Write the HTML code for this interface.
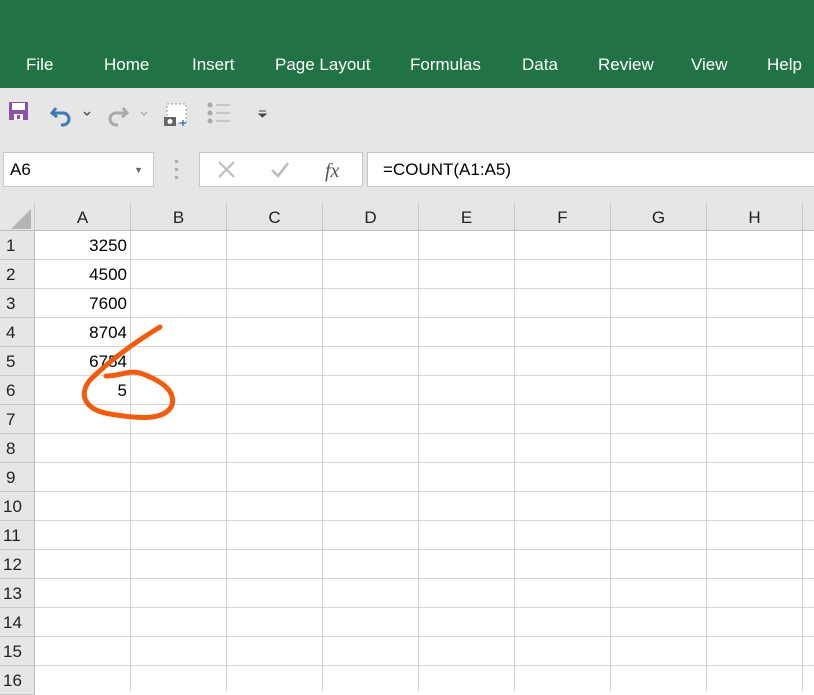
<!DOCTYPE html>
<html><head><style>
body{margin:0;width:814px;height:691px;overflow:hidden;background:#fff;font-family:"Liberation Sans",sans-serif;position:relative}
.abs{position:absolute}
#rib{left:0;top:0;width:814px;height:88px;background:#217346}
.tab{position:absolute;top:55px;color:#fff;font-size:17px}
#tb{left:0;top:88px;width:814px;height:115px;background:#e6e6e6}
.box{position:absolute;background:#fff;border:1px solid #c6c6c6;box-sizing:border-box}
.ch{position:absolute;top:203px;height:28px;background:#e6e6e6;border-right:1px solid #c8c8c8;box-sizing:border-box;text-align:center;font-size:17px;line-height:30px;color:#222}
.rh{position:absolute;left:0;width:35px;height:29px;background:#e6e6e6;border-bottom:1px solid #c8c8c8;border-right:1px solid #bdbdbd;box-sizing:border-box;font-size:17px;line-height:29px;padding-left:6px;color:#222}
.vl{position:absolute;top:231px;width:1px;height:460px;background:#d4d4d4}
.hl{position:absolute;left:35px;width:779px;height:1px;background:#d4d4d4}
.num{position:absolute;width:92px;left:35px;text-align:right;font-size:17px;color:#000;line-height:29px}
</style></head><body>
<div id="rib" class="abs"></div>
<div class="tab" style="left:26px">File</div>
<div class="tab" style="left:104px">Home</div>
<div class="tab" style="left:192px">Insert</div>
<div class="tab" style="left:275px">Page Layout</div>
<div class="tab" style="left:410px">Formulas</div>
<div class="tab" style="left:522px">Data</div>
<div class="tab" style="left:598px">Review</div>
<div class="tab" style="left:691px">View</div>
<div class="tab" style="left:767px">Help</div>
<div id="tb" class="abs"></div>
<svg class="abs" style="left:0;top:96px" width="300" height="35">
<rect x="9" y="6" width="19" height="18" fill="#8a52a8"/><rect x="12" y="7" width="13" height="7" fill="#fff"/><rect x="14" y="18" width="9" height="6" fill="#fff"/><rect x="17" y="19" width="3" height="4" fill="#8a52a8"/>
<path d="M56 12 L52 17 L57 21 M52 17 H63 a6 6 0 0 1 0 12 H61" stroke="#3e7bb6" stroke-width="3" fill="none"/>
<path d="M84 16 l3 3 3-3" stroke="#444" stroke-width="1.3" fill="none"/>
<path d="M123 12 L127 17 L122 21 M127 17 H116 a6 6 0 0 0 0 12 H118" stroke="#aaa" stroke-width="3" fill="none"/>
<path d="M141 16 l3 3 3-3" stroke="#aaa" stroke-width="1.3" fill="none"/>
<rect x="167" y="8" width="19" height="19" fill="#fff" stroke="#999" stroke-dasharray="2 2"/>
<rect x="164" y="21" width="12" height="9" fill="#666"/><circle cx="170" cy="25.5" r="2.5" fill="#fff"/>
<path d="M180 27 h6 M183 24 v6" stroke="#3e7bb6" stroke-width="1.5"/>
<g fill="#aaa"><circle cx="210" cy="9" r="2.5"/><circle cx="210" cy="17" r="2.5"/><circle cx="210" cy="25" r="2.5"/></g>
<path d="M216 9 h14 M216 17 h14 M216 25 h14" stroke="#aaa" stroke-width="1"/>
<path d="M259 15 h7 M259 18 l3.5 3 3.5-3z" stroke="#444" fill="#444"/>
</svg>
<div class="box" style="left:3px;top:152px;width:151px;height:35px;font-size:17px;line-height:34px;padding-left:6px">A6<span style="position:absolute;right:10px;top:0;font-size:9px;color:#666">▼</span></div>
<svg class="abs" style="left:173px;top:158px" width="8" height="24"><g fill="#aaa"><rect x="2" y="2" width="3" height="3"/><rect x="2" y="10" width="3" height="3"/><rect x="2" y="18" width="3" height="3"/></g></svg>
<div class="box" style="left:199px;top:152px;width:164px;height:35px"></div>
<svg class="abs" style="left:199px;top:152px" width="164" height="35"><path d="M20 10 l15 15 M35 10 l-15 15" stroke="#bbb" stroke-width="2"/><path d="M73 18 l6 6 10-13" stroke="#bbb" stroke-width="2.5" fill="none"/><text x="126" y="25" font-family="Liberation Serif" font-style="italic" font-size="20" fill="#555">fx</text></svg>
<div class="box" style="left:367px;top:152px;width:460px;height:35px;font-size:17px;line-height:34px;padding-left:15px">=COUNT(A1:A5)</div>
<div class="ch" style="left:0;width:35px"></div>
<svg class="abs" style="left:10px;top:208px" width="22" height="22"><path d="M21 1 V21 H1z" fill="#b4b4b4"/></svg>
<div class="ch" style="left:35px;width:96px">A</div>
<div class="ch" style="left:131px;width:96px">B</div>
<div class="ch" style="left:227px;width:96px">C</div>
<div class="ch" style="left:323px;width:96px">D</div>
<div class="ch" style="left:419px;width:96px">E</div>
<div class="ch" style="left:515px;width:96px">F</div>
<div class="ch" style="left:611px;width:96px">G</div>
<div class="ch" style="left:707px;width:96px">H</div>
<div class="ch" style="left:803px;width:20px"></div>
<div class="abs" style="left:0;top:230px;width:814px;height:1px;background:#bdbdbd"></div>
<div class="vl" style="left:130px"></div><div class="vl" style="left:226px"></div><div class="vl" style="left:322px"></div><div class="vl" style="left:418px"></div><div class="vl" style="left:514px"></div><div class="vl" style="left:610px"></div><div class="vl" style="left:706px"></div><div class="vl" style="left:802px"></div>
<div class="hl" style="top:259px"></div><div class="hl" style="top:288px"></div><div class="hl" style="top:317px"></div><div class="hl" style="top:346px"></div><div class="hl" style="top:375px"></div><div class="hl" style="top:404px"></div><div class="hl" style="top:433px"></div><div class="hl" style="top:462px"></div><div class="hl" style="top:491px"></div><div class="hl" style="top:520px"></div><div class="hl" style="top:549px"></div><div class="hl" style="top:578px"></div><div class="hl" style="top:607px"></div><div class="hl" style="top:636px"></div><div class="hl" style="top:665px"></div>
<div class="rh" style="top:231px">1</div><div class="rh" style="top:260px">2</div><div class="rh" style="top:289px">3</div><div class="rh" style="top:318px">4</div><div class="rh" style="top:347px">5</div><div class="rh" style="top:376px">6</div><div class="rh" style="top:405px">7</div><div class="rh" style="top:434px">8</div><div class="rh" style="top:463px">9</div><div class="rh" style="top:492px;padding-left:3px">10</div><div class="rh" style="top:521px;padding-left:3px">11</div><div class="rh" style="top:550px;padding-left:3px">12</div><div class="rh" style="top:579px;padding-left:3px">13</div><div class="rh" style="top:608px;padding-left:3px">14</div><div class="rh" style="top:637px;padding-left:3px">15</div><div class="rh" style="top:666px;padding-left:3px">16</div>
<div class="num" style="top:231px">3250</div><div class="num" style="top:260px">4500</div><div class="num" style="top:289px">7600</div><div class="num" style="top:318px">8704</div><div class="num" style="top:347px">6754</div><div class="num" style="top:376px">5</div>
<svg class="abs" style="left:0;top:0" width="814" height="691"><path d="M160 327 C130 345 105 365 90 380 C78 395 85 410 110 414 C135 418 165 422 172 405 C176 390 160 380 140 373 C128 370 120 376 106 376" stroke="#f25c0f" stroke-width="5" fill="none" stroke-linecap="round"/></svg>
</body></html>
